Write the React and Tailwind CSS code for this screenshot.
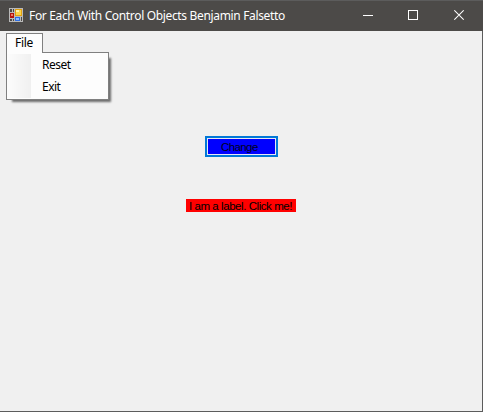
function AppIcon() {
  return (
    <svg width="14" height="14" viewBox="0 0 14 14" shapeRendering="crispEdges" className="block shrink-0">
      <rect width="14" height="14" fill="#b9b9b9" />
      <rect x="1" y="1" width="2" height="3" fill="#4c4a48" />
      <rect x="4" y="1" width="1" height="3" fill="#4c4a48" />
      <rect x="1" y="5" width="4" height="5" fill="#b3140f" />
      <rect x="2" y="6" width="2" height="2" fill="#f07a62" />
      <rect x="6" y="1" width="7" height="7" fill="#e0a010" />
      <rect x="7" y="2" width="5" height="5" fill="#fbd54a" />
      <rect x="7" y="2" width="3" height="2" fill="#fff0b0" />
      <rect x="1" y="11" width="2" height="2" fill="#4c4a48" />
      <rect x="4" y="11" width="1" height="2" fill="#4c4a48" />
      <rect x="6" y="9" width="5" height="4" fill="#2f6fe0" />
      <rect x="7" y="10" width="3" height="2" fill="#8fbcff" />
      <rect x="12" y="9" width="1" height="4" fill="#4c4a48" />
    </svg>
  );
}

function TitleBar() {
  return (
    <header className="flex h-[31px] items-start border-t border-[#5c5c5c] bg-[#4c4a48] pl-[9px] pt-[7px] text-white">
      <AppIcon />
      <h1 className="ml-1.5 grow whitespace-nowrap text-[12px] leading-[15px] tracking-[-0.34px]">
        For Each With Control Objects Benjamin Falsetto
      </h1>
      <div className="flex pr-[19px]">
        <svg width="10" height="14" className="mr-[35px]" shapeRendering="crispEdges">
          <path d="M0 7.5h10" stroke="#fff" />
        </svg>
        <svg width="10" height="14" className="mr-9" shapeRendering="crispEdges">
          <path d="M.5 2.5h9v9h-9z" fill="none" stroke="#fff" />
        </svg>
        <svg width="10" height="14">
          <path d="M.3 2.3l9.4 9.4M9.7 2.3L.3 11.7" stroke="#fff" strokeWidth="1.2" />
        </svg>
      </div>
    </header>
  );
}

function FileMenu() {
  return (
    <nav className="relative h-[21px] pl-1.5 pt-0.5 text-[12px] leading-[15px] tracking-[-0.5px]">
      <div className="relative z-10 h-5 w-[37px] border border-b-0 border-[#808080] bg-[#fdfdfd] pl-2 pt-px tracking-[-0.3px]">File</div>
      <div className="absolute left-1.5 top-[21px] flex h-12 w-[103px] border border-[#808080] bg-[#fdfdfd] py-px shadow-[4px_4px_2px_-2px_rgba(0,0,0,0.55)]">
        <div className="h-full w-6 bg-linear-to-r from-[#fcfcfc] to-[#f0f0f0]" />
        <div className="flex flex-col gap-[7px] pl-[11px] pt-[3px]">
          <span>Reset</span>
          <span>Exit</span>
        </div>
      </div>
    </nav>
  );
}

export default function App() {
  return (
    <div className="flex h-[412px] w-[483px] flex-col overflow-hidden bg-[#f0f0f0] font-['Noto_Sans',sans-serif] text-black">
      <TitleBar />
      <main className="flex grow flex-col border-b border-r border-[#5c5c5c]">
        <FileMenu />
        <button className="ml-[205px] mt-[84px] h-[21px] w-[73px] border-2 border-[#0078d7] bg-[#e6e6f5] p-px">
          <span className="block h-[15px] bg-[#0000ff] pl-[13px] text-left font-['Liberation_Sans',sans-serif] text-[11.5px] leading-[16px] tracking-[-0.6px] text-[#000020]">
            Change
          </span>
        </button>
        <div className="ml-[186px] mt-[42px] h-[13px] w-[110px] whitespace-nowrap bg-[#ff0000] pl-[3px] font-['Liberation_Sans',sans-serif] text-[11.5px] leading-[14px] tracking-[-0.44px]">
          I am a label. Click me!
        </div>
      </main>
    </div>
  );
}
